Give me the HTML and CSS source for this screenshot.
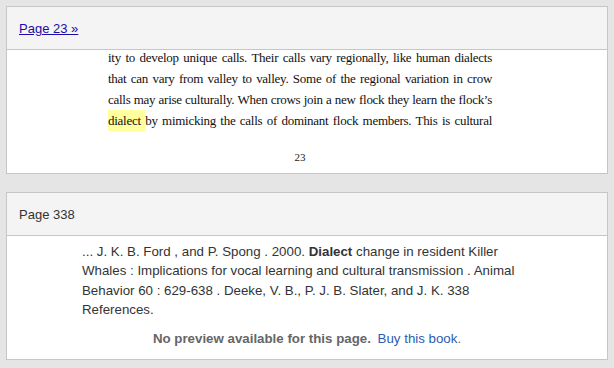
FILE: index.html
```html
<!DOCTYPE html>
<html>
<head>
<meta charset="utf-8">
<link rel="stylesheet" href="styles.css">
</head>
<body>
<div class="results">
  <div class="card">
    <div class="card-head"><a class="page-link" href="#">Page 23 »</a></div>
    <div class="card-body scan">
      <div class="scan-text">
        <div class="line">ity to develop unique calls. Their calls vary regionally, like human dialects</div>
        <div class="line">that can vary from valley to valley. Some of the regional variation in crow</div>
        <div class="line">calls may arise culturally. When crows join a new flock they learn the flock’s</div>
        <div class="line"><span class="hl">dialect </span>by mimicking the calls of dominant flock members. This is cultural</div>
      </div>
      <div class="folio">23</div>
    </div>
  </div>
  <div class="card">
    <div class="card-head"><span class="page-label">Page 338</span></div>
    <div class="card-body snippet">
      <p class="snippet-text">... J. K. B. Ford , and P. Spong . 2000. <b>Dialect</b> change in resident Killer<br>Whales : Implications for vocal learning and cultural transmission . Animal<br>Behavior 60 : 629-638 . Deeke, V. B., P. J. B. Slater, and J. K. 338<br>References.</p>
      <p class="no-preview"><b>No preview available for this page.</b> <a href="#" class="buy">Buy this book</a>.</p>
    </div>
  </div>
</div>
</body>
</html>
```
FILE: styles.css
```css
html, body {
  margin: 0;
  padding: 0;
}
body {
  background: #e5e5e5;
  font-family: Arial, "Liberation Sans", sans-serif;
  width: 614px;
  height: 368px;
  overflow: hidden;
}
.results {
  padding: 6px;
  display: flex;
  flex-direction: column;
  gap: 18px;
}
.card {
  border: 1px solid #c6c6c6;
  background: #fff;
}
.card-head {
  height: 42px;
  background: #f4f4f4;
  border-bottom: 1px solid #c6c6c6;
  display: flex;
  align-items: center;
  padding-left: 12px;
  font-size: 13px;
}
.page-link {
  color: #1a0dab;
  text-decoration: underline;
}
.page-label {
  color: #333;
}
.card-body {
  height: 123px;
  overflow: hidden;
}
.scan {
  padding-left: 101px;
}
.scan-text {
  width: 384px;
  margin-top: -3px;
  font-family: "Liberation Serif", "DejaVu Serif", serif;
  font-size: 13px;
  letter-spacing: -0.27px;
  line-height: 21px;
  color: #111;
}
.line {
  text-align: justify;
  text-align-last: justify;
  white-space: nowrap;
}
.hl {
  background: #ffff9e;
  padding: 3px 0;
}
.folio {
  width: 384px;
  text-align: center;
  font-family: "Liberation Serif", serif;
  font-size: 11px;
  color: #222;
  margin-top: 20px;
}
.snippet {
  padding: 6px 0 0 75px;
  box-sizing: border-box;
}
.snippet-text {
  margin: 0;
  font-size: 13.3px;
  line-height: 19.4px;
  color: #333;
}
.no-preview {
  margin: 11px 0 0 -75px;
  text-align: center;
  font-size: 13.3px;
  color: #666;
}
.no-preview b {
  color: #666;
}
.buy {
  color: #2a5db0;
  text-decoration: none;
  margin-left: 3px;
}
```
